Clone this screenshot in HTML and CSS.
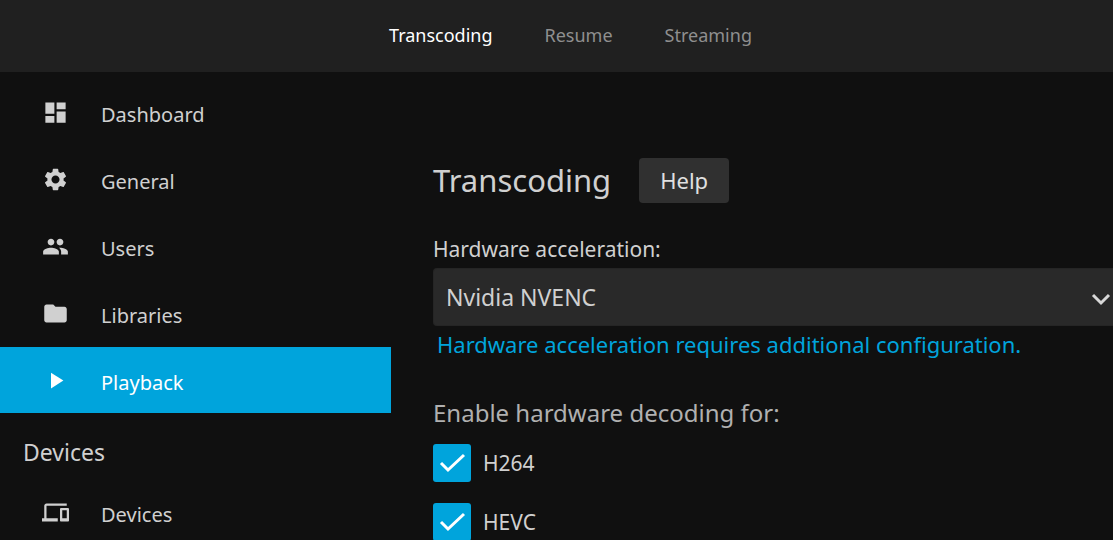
FILE: index.html
```html
<!DOCTYPE html>
<html lang="en">
<head>
<meta charset="utf-8">
<meta name="viewport" content="width=device-width, initial-scale=1">
<title>Transcoding</title>
<link rel="stylesheet" href="styles.css">
</head>
<body>
<header class="header">
  <nav class="tabs" aria-label="Playback settings">
    <button class="tab tab-active" type="button">Transcoding</button>
    <button class="tab" type="button">Resume</button>
    <button class="tab" type="button">Streaming</button>
  </nav>
</header>
<div class="layout">
  <nav class="sidebar" aria-label="Administration">
    <a class="nav-item" href="#dashboard"><svg class="icon" viewBox="0 0 24 24"><path d="M3 13h8V3H3v10zm0 8h8v-6H3v6zm10 0h8V11h-8v10zm0-18v6h8V3h-8z"/></svg><span class="nav-text">Dashboard</span></a>
    <a class="nav-item" href="#general"><svg class="icon" viewBox="0 0 24 24"><path d="M19.14 12.94c.04-.3.06-.61.06-.94 0-.32-.02-.64-.07-.94l2.03-1.58c.18-.14.23-.41.12-.61l-1.92-3.32c-.12-.22-.37-.29-.59-.22l-2.39.96c-.5-.38-1.03-.7-1.62-.94l-.36-2.54c-.04-.24-.24-.41-.48-.41h-3.84c-.24 0-.43.17-.47.41l-.36 2.54c-.59.24-1.13.57-1.62.94l-2.39-.96c-.22-.08-.47 0-.59.22L2.74 8.87c-.12.21-.08.47.12.61l2.03 1.58c-.05.3-.09.63-.09.94s.02.64.07.94l-2.03 1.58c-.18.14-.23.41-.12.61l1.92 3.32c.12.22.37.29.59.22l2.39-.96c.5.38 1.03.7 1.62.94l.36 2.54c.05.24.24.41.48.41h3.84c.24 0 .44-.17.47-.41l.36-2.54c.59-.24 1.13-.56 1.62-.94l2.39.96c.22.08.47 0 .59-.22l1.92-3.32c.12-.22.07-.47-.12-.61l-2.01-1.58zM12 15.6c-1.98 0-3.6-1.62-3.6-3.6s1.62-3.6 3.6-3.6 3.6 1.62 3.6 3.6-1.62 3.6-3.6 3.6z"/></svg><span class="nav-text">General</span></a>
    <a class="nav-item" href="#users"><svg class="icon" viewBox="0 0 24 24"><path d="M16 11c1.66 0 2.99-1.34 2.99-3S17.66 5 16 5s-3 1.34-3 3 1.34 3 3 3zm-8 0c1.66 0 2.99-1.34 2.99-3S9.66 5 8 5 5 6.340 5 8s1.340 3 3 3zm0 2c-2.330 0-7 1.170-7 3.500V19h14v-2.500c0-2.330-4.670-3.500-7-3.500zm8 0c-.29 0-.62.02-.97.05 1.160.84 1.970 1.970 1.970 3.450V19h6v-2.500c0-2.330-4.670-3.500-7-3.500z"/></svg><span class="nav-text">Users</span></a>
    <a class="nav-item" href="#libraries"><svg class="icon" viewBox="0 0 24 24"><path d="M10 4H4c-1.100 0-1.990.9-1.990 2L2 18c0 1.100.9 2 2 2h16c1.100 0 2-.9 2-2V8c0-1.100-.9-2-2-2h-8l-2-2z"/></svg><span class="nav-text">Libraries</span></a>
    <a class="nav-item nav-item-active" href="#playback" aria-current="page"><svg class="icon" viewBox="0 0 24 24"><path d="M8 5v14l11-7z"/></svg><span class="nav-text">Playback</span></a>
    <h2 class="sidebar-heading">Devices</h2>
    <a class="nav-item" href="#devices"><svg class="icon" viewBox="0 0 24 24"><path d="M4 6h18V4H4c-1.100 0-2 .9-2 2v11H0v3h14v-3H4V6zm19 2h-6c-.55 0-1 .45-1 1v10c0 .55.45 1 1 1h6c.55 0 1-.45 1-1V9c0-.55-.45-1-1-1zm-1 9h-4v-7h4v7z"/></svg><span class="nav-text">Devices</span></a>
  </nav>
  <main class="content">
    <div class="title-row">
      <h1 class="title">Transcoding</h1>
      <button class="help" type="button">Help</button>
    </div>
    <label class="field-label" for="hwaccel">Hardware acceleration:</label>
    <div class="select-wrap">
      <select class="select" id="hwaccel"><option>Nvidia NVENC</option></select>
      <svg class="select-arrow" viewBox="0 0 20 14"><path d="M2 3l8 8 8-8"/></svg>
    </div>
    <a class="config-link" href="#configuration">Hardware acceleration requires additional configuration.</a>
    <h3 class="group-heading">Enable hardware decoding for:</h3>
    <div class="checks">
      <label class="check"><input class="check-input" type="checkbox" checked><svg class="check-mark" viewBox="0 0 38 38"><path d="M8 19l7 7 16-15"/></svg><span>H264</span></label>
      <label class="check"><input class="check-input" type="checkbox" checked><svg class="check-mark" viewBox="0 0 38 38"><path d="M8 19l7 7 16-15"/></svg><span>HEVC</span></label>
    </div>
  </main>
</div>
</body>
</html>
```
FILE: styles.css
```css
* { box-sizing: border-box; }

body {
  display: flex;
  flex-direction: column;
  height: 100vh;
  margin: 0;
  overflow: hidden;
  background: #101010;
  color: #d0d0d0;
  font-family: "Noto Sans", sans-serif;
}

h1, h2, h3 { margin: 0; font-weight: 400; }
button, select { font-family: inherit; }

.header {
  flex: none;
  padding-left: 28px;
  background: #202020;
}

.tabs {
  display: flex;
  justify-content: center;
}

.tab {
  padding: 23px 26px 25px;
  border: 0;
  background: none;
  color: #8f8f8f;
  font-size: 18px;
  line-height: 24px;
}
.tab-active { color: #fff; }

.layout {
  display: flex;
  flex: 1;
  min-height: 0;
}

.sidebar {
  display: flex;
  flex: none;
  flex-direction: column;
  gap: 1px;
  width: 391px;
  padding-top: 7px;
}

.nav-item {
  display: flex;
  flex: none;
  align-items: center;
  gap: 32px;
  height: 66px;
  padding-left: 42px;
  color: inherit;
  font-size: 20px;
  line-height: 28px;
  text-decoration: none;
}
.nav-item-active { background: #00a4dc; color: #fff; }
.nav-text { padding-top: 6px; }

.icon {
  flex: none;
  width: 27px;
  height: 27px;
  fill: currentColor;
}

.sidebar-heading {
  padding: 22px 23px 10px;
  font-size: 23px;
  line-height: 32px;
}

.content {
  flex: 1;
  min-width: 0;
  padding: 86px 0 0 42px;
}

.title-row {
  display: flex;
  align-items: center;
  gap: 28px;
  margin-bottom: 32px;
}
.title { font-size: 31px; line-height: 45px; }

.help {
  padding: 6px 21px 7px;
  border: 0;
  border-radius: 4px;
  background: #303030;
  color: #e0e0e0;
  font-size: 22px;
  line-height: 32px;
}

.field-label {
  display: block;
  padding-bottom: 5px;
  font-size: 21px;
  line-height: 28px;
}

.select-wrap { position: relative; }
.select {
  display: block;
  width: 100%;
  height: 58px;
  padding: 0 40px 0 12px;
  border: 1px solid #252525;
  border-right: 0;
  border-radius: 4px 0 0 4px;
  background: #292929;
  color: #d0d0d0;
  font-size: 23px;
  appearance: none;
}
.select-arrow {
  position: absolute;
  top: 24px;
  right: 2px;
  width: 20px;
  height: 14px;
  fill: none;
  stroke: #d8d8d8;
  stroke-width: 3;
  pointer-events: none;
}

.config-link {
  display: block;
  padding: 4px 4px 0;
  color: #00a4dc;
  font-size: 22px;
  line-height: 28px;
  text-decoration: none;
}

.group-heading {
  padding: 39px 0 15px;
  color: #b0b0b0;
  font-size: 24px;
  line-height: 32px;
}

.checks {
  display: flex;
  flex-direction: column;
  gap: 21px;
}
.check {
  display: grid;
  grid-template-columns: 38px 1fr;
  align-items: center;
  column-gap: 12px;
  font-size: 21px;
  line-height: 38px;
}
.check-input,
.check-mark {
  grid-area: 1 / 1;
  width: 38px;
  height: 38px;
  margin: 0;
}
.check-input {
  border-radius: 3px;
  background: #00a4dc;
  appearance: none;
}
.check-mark {
  fill: none;
  stroke: #fff;
  stroke-width: 3;
  visibility: hidden;
  pointer-events: none;
}
.check-input:checked + .check-mark { visibility: visible; }
```
